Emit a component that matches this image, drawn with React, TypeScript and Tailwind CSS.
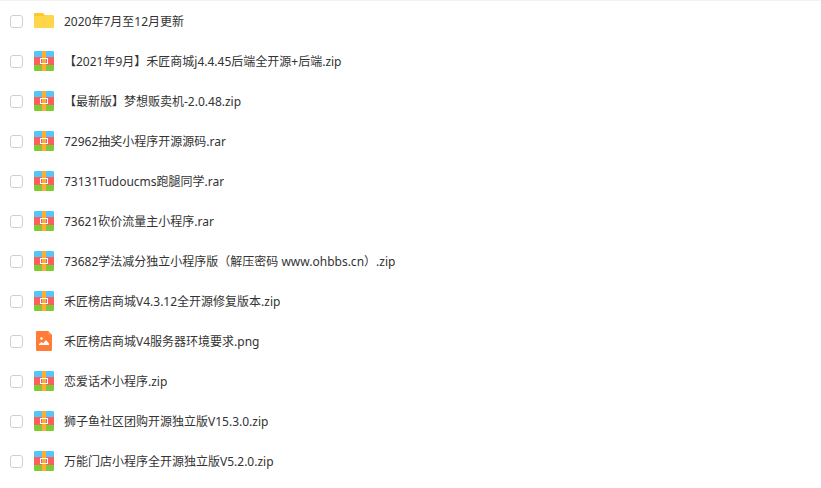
import React from 'react';

type FileKind = 'folder' | 'archive' | 'image';

interface FileItem {
  name: string;
  kind: FileKind;
}

const FILES: FileItem[] = [
  { name: '2020年7月至12月更新', kind: 'folder' },
  { name: '【2021年9月】禾匠商城j4.4.45后端全开源+后端.zip', kind: 'archive' },
  { name: '【最新版】梦想贩卖机-2.0.48.zip', kind: 'archive' },
  { name: '72962抽奖小程序开源源码.rar', kind: 'archive' },
  { name: '73131Tudoucms跑腿同学.rar', kind: 'archive' },
  { name: '73621砍价流量主小程序.rar', kind: 'archive' },
  { name: '73682学法减分独立小程序版（解压密码 www.ohbbs.cn）.zip', kind: 'archive' },
  { name: '禾匠榜店商城V4.3.12全开源修复版本.zip', kind: 'archive' },
  { name: '禾匠榜店商城V4服务器环境要求.png', kind: 'image' },
  { name: '恋爱话术小程序.zip', kind: 'archive' },
  { name: '狮子鱼社区团购开源独立版V15.3.0.zip', kind: 'archive' },
  { name: '万能门店小程序全开源独立版V5.2.0.zip', kind: 'archive' },
];

const FolderIcon = () => (
  <svg className="h-5 w-5 shrink-0" viewBox="0 0 20 20" aria-hidden="true">
    <path d="M0 3.2A1.2 1.2 0 0 1 1.2 2H8.6Q9.4 2 9.8 2.8L10.5 4H18V8H0Z" fill="#FFC72B" />
    <path d="M0 5H9.3L10.4 4H18.8A1.2 1.2 0 0 1 20 5.2V15.8A1.2 1.2 0 0 1 18.8 17H1.2A1.2 1.2 0 0 1 0 15.8Z" fill="#FFD54A" />
  </svg>
);

const ArchiveIcon = () => (
  <svg className="h-5 w-5 shrink-0" viewBox="0 0 20 20" aria-hidden="true">
    <path d="M0 6V1.2A1.2 1.2 0 0 1 1.2 0H18.8A1.2 1.2 0 0 1 20 1.2V6Z" fill="#55C6F9" />
    <rect y="6" width="20" height="8" fill="#FF5F5C" />
    <path d="M0 14H20V18.8A1.2 1.2 0 0 1 18.8 20H1.2A1.2 1.2 0 0 1 0 18.8Z" fill="#7BCB35" />
    <rect x="8" width="4" height="20" fill="#FFAE33" />
    <rect x="6.5" y="7.5" width="7" height="5" fill="none" stroke="#FFFFFF" />
  </svg>
);

const ImageIcon = () => (
  <svg className="h-5 w-5 shrink-0" viewBox="0 0 20 20" aria-hidden="true">
    <path d="M3.2 0H14L18 4V18.8A1.2 1.2 0 0 1 16.8 20H3.2A1.2 1.2 0 0 1 2 18.8V1.2A1.2 1.2 0 0 1 3.2 0Z" fill="#FF7B36" />
    <path d="M14 0L18 4H15A1 1 0 0 1 14 3Z" fill="#FF8F55" />
    <circle cx="7.5" cy="7.5" r="1.3" fill="#FFFFFF" />
    <path d="M5 14V13L7.4 10.9L9.3 12.3L12 9L15 12.6V14Z" fill="#FFFFFF" />
  </svg>
);

const ICONS: Record<FileKind, React.FC> = {
  folder: FolderIcon,
  archive: ArchiveIcon,
  image: ImageIcon,
};

const FileRow: React.FC<{ file: FileItem }> = ({ file }) => {
  const Icon = ICONS[file.kind];

  return (
    <li>
      <label className="flex h-10 items-center px-[10px]">
        <input
          type="checkbox"
          className="mr-[11px] h-[13px] w-[13px] shrink-0 appearance-none rounded-[3px] border border-[#cfcfcf] bg-white checked:border-[#06a7ff] checked:bg-[#06a7ff]"
        />
        <Icon />
        <span className="ml-[10px] truncate pt-[2px]">{file.name}</span>
      </label>
    </li>
  );
};

export default function App() {
  return (
    <main className="border-t border-[#f3f3f3] bg-white font-['Noto_Sans','Noto_Sans_CJK_SC',sans-serif] text-xs text-[#333333]">
      <ul>
        {FILES.map((file) => (
          <FileRow key={file.name} file={file} />
        ))}
      </ul>
    </main>
  );
}
